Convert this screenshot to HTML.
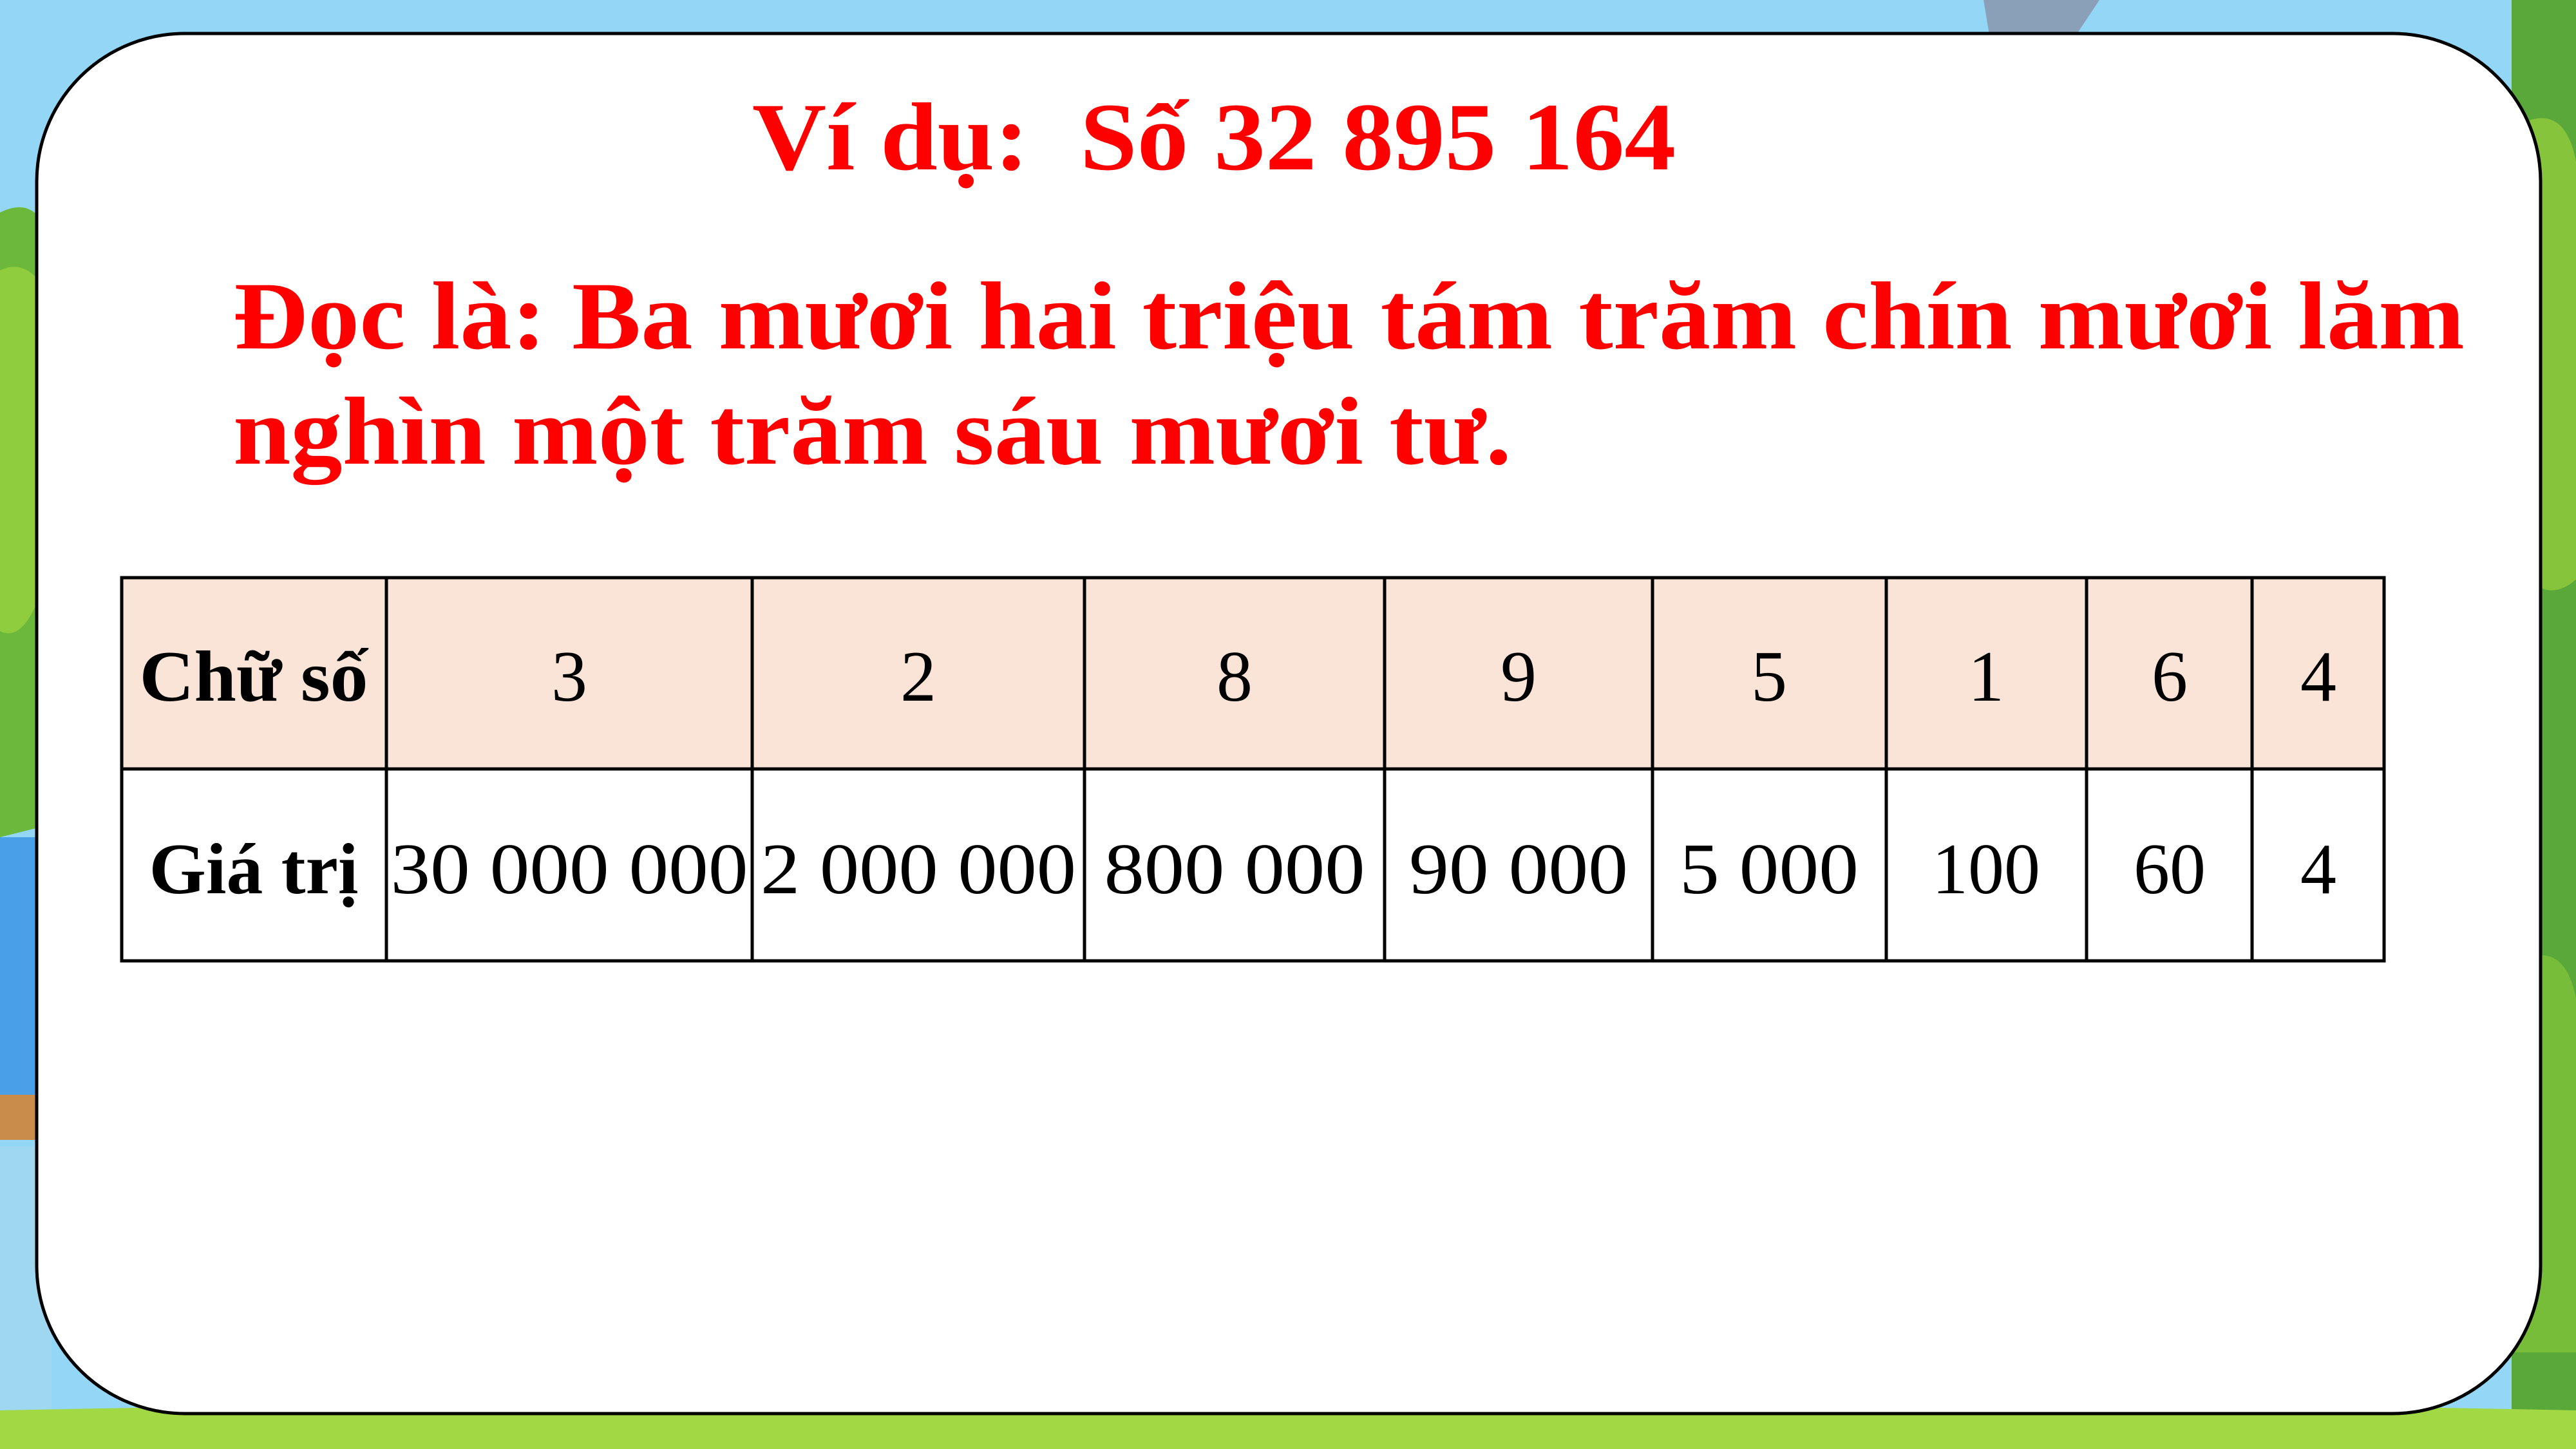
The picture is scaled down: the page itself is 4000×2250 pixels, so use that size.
<!DOCTYPE html>
<html><head><meta charset="utf-8"><style>
html,body{margin:0;padding:0;width:4000px;height:2250px;overflow:hidden;background:#8fd3f4}
</style></head><body>
<svg width="4000" height="2250" viewBox="0 0 4000 2250" xmlns="http://www.w3.org/2000/svg">
<rect width="4000" height="2250" fill="#93d6f6"/>
<!-- left background -->
<path d="M0 330 Q60 300 80 380 L80 1280 L0 1300 Z" fill="#6cb83a"/>
<path d="M0 420 Q40 400 70 450 L70 900 Q40 1000 0 980 Z" fill="#8fcd3e"/>
<rect x="0" y="1300" width="80" height="450" fill="#4aa0e8"/>
<rect x="0" y="1700" width="80" height="70" fill="#c98c4a"/>
<rect x="0" y="1780" width="80" height="470" fill="#9fd6f0"/>
<!-- right background -->
<path d="M3900 0 L4000 0 L4000 2250 L3900 2250 Z" fill="#5aa83a"/>
<path d="M3900 200 Q3980 150 4000 250 L4000 900 Q3940 950 3900 850 Z" fill="#86c43c"/>
<path d="M3900 1500 Q3980 1450 4000 1550 L4000 2100 L3900 2100 Z" fill="#78bd3a"/>
<path d="M3080 0 L3260 0 L3220 60 L3090 60 Z" fill="#8aa0b8"/>
<!-- bottom grass -->
<path d="M0 2190 Q2000 2150 4000 2190 L4000 2250 L0 2250 Z" fill="#a2d844"/>
<!-- card -->
<rect x="57" y="52" width="3888" height="2143" rx="230" ry="230" fill="#fff" stroke="#000" stroke-width="5"/>
<g font-family="Liberation Serif, serif" font-weight="bold" fill="#f00" font-size="150">
<text x="1168" y="263" textLength="1434" lengthAdjust="spacingAndGlyphs">Ví dụ:&#160; Số 32 895 164</text>
<text x="362" y="541" textLength="3465" lengthAdjust="spacingAndGlyphs">Đọc là: Ba mươi hai triệu tám trăm chín mươi lăm</text>
<text x="362" y="720" textLength="1985" lengthAdjust="spacingAndGlyphs">nghìn một trăm sáu mươi tư.</text>
</g>
<!-- table -->
<rect x="189" y="897" width="3513" height="297" fill="#fae4d8"/>
<g stroke="#000" stroke-width="5" fill="none">
<rect x="189" y="897" width="3513" height="595"/>
<line x1="189" y1="1194" x2="3702" y2="1194"/>
<line x1="600" y1="897" x2="600" y2="1492"/>
<line x1="1168" y1="897" x2="1168" y2="1492"/>
<line x1="1684" y1="897" x2="1684" y2="1492"/>
<line x1="2150" y1="897" x2="2150" y2="1492"/>
<line x1="2566" y1="897" x2="2566" y2="1492"/>
<line x1="2929" y1="897" x2="2929" y2="1492"/>
<line x1="3240" y1="897" x2="3240" y2="1492"/>
<line x1="3497" y1="897" x2="3497" y2="1492"/>
</g>
<g font-family="Liberation Serif, serif" font-size="112" fill="#000" text-anchor="middle">
<text x="394" y="1088" font-weight="bold" textLength="355" lengthAdjust="spacingAndGlyphs">Chữ số</text>
<text x="884" y="1088">3</text>
<text x="1426" y="1088">2</text>
<text x="1917" y="1088">8</text>
<text x="2358" y="1088">9</text>
<text x="2747" y="1088">5</text>
<text x="3084" y="1088">1</text>
<text x="3369" y="1088">6</text>
<text x="3600" y="1088">4</text>
<text x="394" y="1387" font-weight="bold" textLength="325" lengthAdjust="spacingAndGlyphs">Giá trị</text>
<text x="884" y="1387" textLength="555" lengthAdjust="spacingAndGlyphs">30 000 000</text>
<text x="1426" y="1387" textLength="490" lengthAdjust="spacingAndGlyphs">2 000 000</text>
<text x="1917" y="1387" textLength="405" lengthAdjust="spacingAndGlyphs">800 000</text>
<text x="2358" y="1387" textLength="340" lengthAdjust="spacingAndGlyphs">90 000</text>
<text x="2747" y="1387" textLength="278" lengthAdjust="spacingAndGlyphs">5 000</text>
<text x="3084" y="1387">100</text>
<text x="3369" y="1387">60</text>
<text x="3600" y="1387">4</text>
</g>
</svg>
</body></html>
